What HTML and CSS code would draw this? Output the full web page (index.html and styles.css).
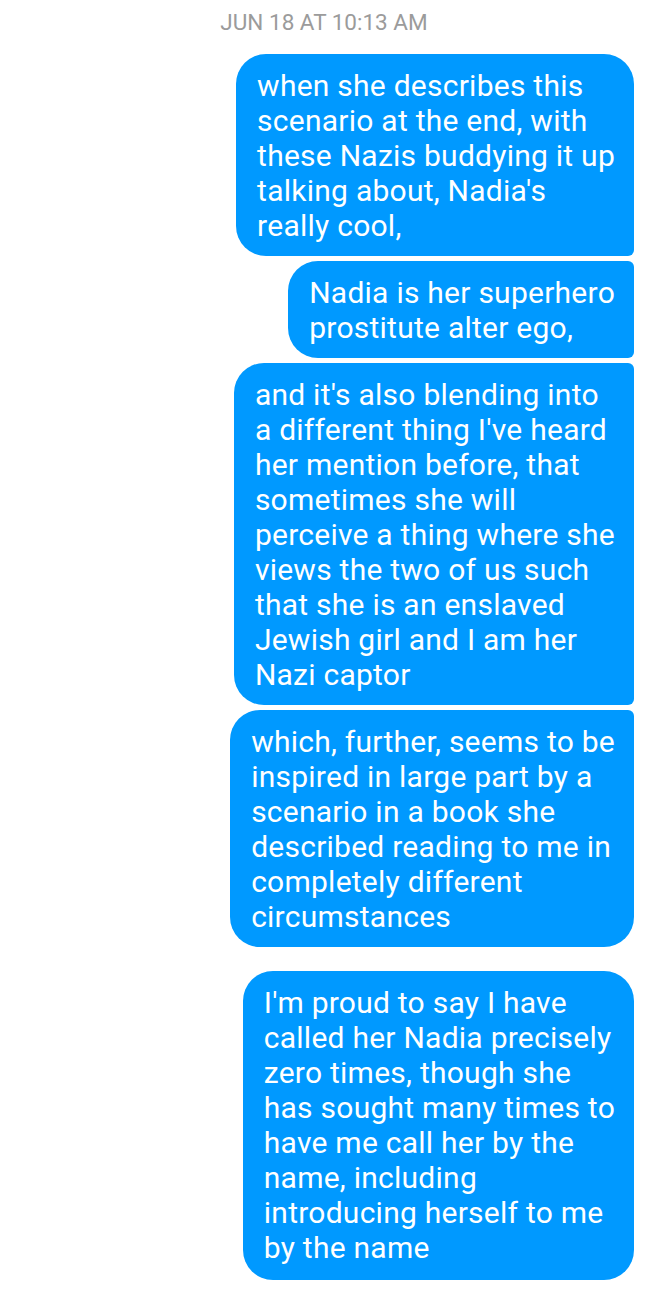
FILE: index.html
```html
<!DOCTYPE html>
<html>
<head>
<meta charset="utf-8">
<link rel="stylesheet" href="styles.css">
</head>
<body>
<div class="thread">
  <div class="stamp">JUN 18 AT 10:13 AM</div>
  <div class="group">
    <div class="bubble first">when she describes this<br>scenario at the end, with<br>these Nazis buddying it up<br>talking about, Nadia's<br>really cool,</div>
    <div class="bubble mid">Nadia is her superhero<br>prostitute alter ego,</div>
    <div class="bubble mid">and it's also blending into<br>a different thing I've heard<br>her mention before, that<br>sometimes she will<br>perceive a thing where she<br>views the two of us such<br>that she is an enslaved<br>Jewish girl and I am her<br>Nazi captor</div>
    <div class="bubble last">which, further, seems to be<br>inspired in large part by a<br>scenario in a book she<br>described reading to me in<br>completely different<br>circumstances</div>
  </div>
  <div class="group">
    <div class="bubble single">I'm proud to say I have<br>called her Nadia precisely<br>zero times, though she<br>has sought many times to<br>have me call her by the<br>name, including<br>introducing herself to me<br>by the name</div>
  </div>
</div>
</body>
</html>
```

FILE: styles.css
```css
html, body {
  margin: 0;
  padding: 0;
  background: #ffffff;
}
.thread {
  width: 648px;
  font-family: Roboto, "Noto Sans", sans-serif;
  display: flex;
  flex-direction: column;
}
.stamp {
  text-align: center;
  color: #9b9b9b;
  font-size: 22.5px;
  line-height: 26px;
  padding-top: 9px;
  height: 54px;
  box-sizing: border-box;
}
.group {
  display: flex;
  flex-direction: column;
  align-items: flex-end;
  gap: 5px;
  padding-right: 14px;
  margin-bottom: 24px;
}
.bubble {
  background: #0099ff;
  color: #ffffff;
  font-size: 30px;
  letter-spacing: 0.25px;
  line-height: 35px;
  white-space: nowrap;
  padding: 14px 19px 13px 21px;
  border-radius: 30px 6px 6px 30px;
}
.bubble.first { border-radius: 30px 30px 6px 30px; }
.bubble.last { border-radius: 30px 6px 30px 30px; }
.bubble.single { border-radius: 30px; padding-bottom: 15px; }
```
